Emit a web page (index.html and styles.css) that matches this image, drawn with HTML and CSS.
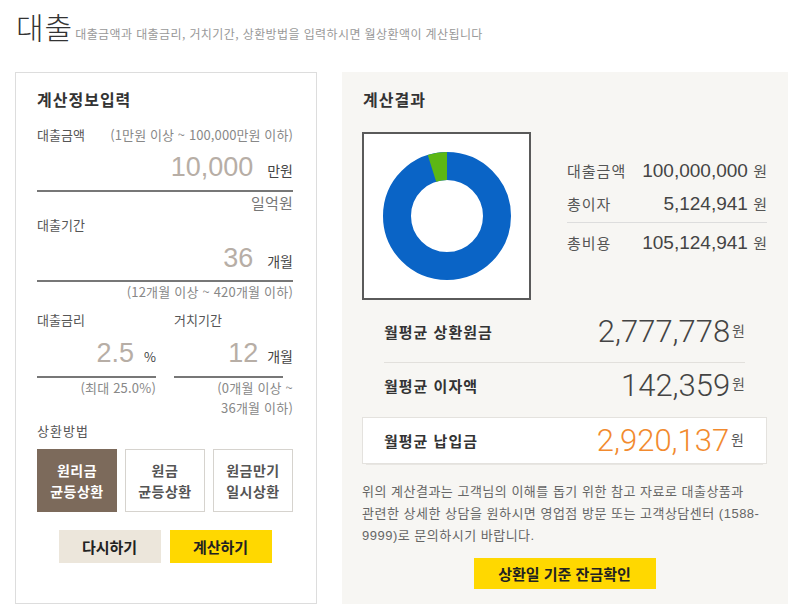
FILE: index.html
```html
<!DOCTYPE html>
<html lang="ko">
<head>
<meta charset="utf-8">
<title>대출</title>
<link rel="stylesheet" href="styles.css">
</head>
<body>
<header class="page-head">
  <h1 class="page-title">대출</h1>
  <p class="page-desc">대출금액과 대출금리, 거치기간, 상환방법을 입력하시면 월상환액이 계산됩니다</p>
</header>
<main class="calc">
  <section class="input-card">
    <h2 class="card-title">계산정보입력</h2>

    <div class="field-label label-split">대출금액 <span class="range">(1만원 이상 ~ 100,000만원 이하)</span></div>
    <div class="value-row"><span class="num">10,000</span><span class="unit">만원</span></div>
    <div class="hint hint-kr">일억원</div>

    <div class="field-label label-gap">대출기간</div>
    <div class="value-row row-b"><span class="num">36</span><span class="unit">개월</span></div>
    <div class="hint">(12개월 이상 ~ 420개월 이하)</div>

    <div class="two-col">
      <div class="col">
        <div class="field-label">대출금리</div>
        <div class="value-row row-c"><span class="num">2.5</span><span class="unit unit-pct">%</span></div>
        <div class="hint">(최대 25.0%)</div>
      </div>
      <div class="col">
        <div class="field-label">거치기간</div>
        <div class="value-row row-c row-short"><span class="num">12</span><span class="unit unit-over">개월</span></div>
        <div class="hint">(0개월 이상 ~<br>36개월 이하)</div>
      </div>
    </div>

    <div class="field-label method-label">상환방법</div>
    <div class="methods">
      <button class="method is-active">원리금<br>균등상환</button>
      <button class="method">원금<br>균등상환</button>
      <button class="method">원금만기<br>일시상환</button>
    </div>

    <div class="actions">
      <button class="btn btn-reset">다시하기</button>
      <button class="btn btn-calc">계산하기</button>
    </div>
  </section>

  <section class="result">
    <h2 class="card-title">계산결과</h2>
    <div class="chart-row">
      <div class="chart">
        <svg width="165" height="164" viewBox="0 0 165 164">
          <circle cx="83" cy="82" r="50" fill="none" stroke="#0a64c6" stroke-width="28"/>
          <circle cx="83" cy="82" r="50" fill="none" stroke="#5cb714" stroke-width="28" stroke-dasharray="15.3 400" transform="rotate(-107.5 83 82)"/>
        </svg>
      </div>
      <div class="summary">
        <div class="sum-row"><span class="sum-label">대출금액</span><span class="sum-val">100,000,000 <span class="sum-unit">원</span></span></div>
        <div class="sum-row"><span class="sum-label">총이자</span><span class="sum-val">5,124,941 <span class="sum-unit">원</span></span></div>
        <div class="sum-row sum-total"><span class="sum-label">총비용</span><span class="sum-val">105,124,941 <span class="sum-unit">원</span></span></div>
      </div>
    </div>

    <div class="monthly">
      <div class="m-row m-first"><span class="m-label">월평균 상환원금</span><span class="m-val">2,777,778<span class="m-unit">원</span></span></div>
      <div class="m-row"><span class="m-label">월평균 이자액</span><span class="m-val">142,359<span class="m-unit">원</span></span></div>
    </div>
    <div class="m-box"><span class="m-label">월평균 납입금</span><span class="m-val m-orange">2,920,137<span class="m-unit">원</span></span></div>

    <p class="note">위의 계산결과는 고객님의 이해를 돕기 위한 참고 자료로 대출상품과<br>관련한 상세한 상담을 원하시면 영업점 방문 또는 고객상담센터 (1588-<br>9999)로 문의하시기 바랍니다.</p>

    <button class="btn btn-balance">상환일 기준 잔금확인</button>
  </section>
</main>
</body>
</html>
```

FILE: styles.css
```css
* { box-sizing: border-box; }
html, body { margin: 0; padding: 0; background: #fff; }
body {
  font-family: "Noto Sans CJK KR", "Noto Sans", sans-serif;
  color: #333;
  width: 800px;
  height: 616px;
  overflow: hidden;
}
h1, h2, p { margin: 0; font-weight: normal; }
button { font-family: inherit; cursor: pointer; }

.page-head {
  display: flex;
  align-items: baseline;
  height: 72px;
  padding: 6px 0 0 16px;
}
.page-title {
  font-size: 30px;
  line-height: 40px;
  font-weight: 300;
  color: #333;
  letter-spacing: 1px;
}
.page-desc {
  margin-left: 2px;
  font-size: 12px;
  color: #999;
  letter-spacing: 0.4px;
}

.calc {
  display: flex;
  gap: 25px;
  padding-left: 15px;
}

/* left card */
.input-card {
  width: 302px;
  height: 532px;
  border: 1px solid #ddd;
  padding: 16px 23px 0 21px;
}
.card-title {
  font-size: 16px;
  line-height: 20px;
  font-weight: bold;
  color: #333;
  letter-spacing: 1px;
}
.field-label {
  font-size: 13px;
  line-height: 20px;
  color: #555;
  margin-top: 16px;
}
.label-split {
  display: flex;
  justify-content: space-between;
}
.range {
  font-size: 13px;
  color: #888;
  letter-spacing: 0.1px;
}
.label-gap { margin-top: 2px; }
.value-row {
  display: flex;
  justify-content: flex-end;
  align-items: baseline;
  height: 47px;
  padding-top: 5px;
  border-bottom: 2px solid #777;
  line-height: 34px;
}
.row-b { padding-top: 6px; }
.row-c { height: 48px; padding-top: 6px; }
.row-short { margin-right: 10px; }
.num {
  font-family: "Liberation Sans", Arial, sans-serif;
  font-size: 27px;
  color: #b7aea6;
}
.unit {
  margin-left: 14px;
  font-size: 14px;
  color: #444;
}
.unit-pct { margin-left: 10px; font-size: 13px; }
.unit-over { margin-left: 9px; margin-right: -10px; }
.hint {
  text-align: right;
  font-size: 13px;
  line-height: 20px;
  color: #888;
  letter-spacing: 0.2px;
}
.hint-kr {
  margin-top: 1px;
  font-size: 15px;
  color: #777;
}

.two-col {
  display: grid;
  grid-template-columns: 119px 119px;
  column-gap: 18px;
  margin-top: -8px;
}
.method-label { margin-top: 3px; letter-spacing: 1px; }

.methods {
  display: grid;
  grid-template-columns: repeat(3, 1fr);
  gap: 8px;
  margin-top: 8px;
}
.method {
  height: 63px;
  border: 1px solid #d6d3ce;
  background: #fff;
  color: #555;
  font-size: 14px;
  line-height: 21px;
  font-weight: bold;
  letter-spacing: 0.5px;
  padding: 0;
}
.method.is-active {
  background: #7c6a5b;
  border-color: #7c6a5b;
  color: #fff;
}

.actions {
  display: flex;
  justify-content: center;
  gap: 9px;
  margin-top: 18px;
}
.btn {
  border: 0;
  padding: 0;
  font-size: 15px;
  font-weight: bold;
  color: #222;
}
.btn-reset {
  width: 102px;
  height: 33px;
  background: #ece6db;
}
.btn-calc {
  width: 102px;
  height: 33px;
  background: #ffd800;
}

/* right panel */
.result {
  width: 446px;
  height: 532px;
  background: #f7f6f3;
  padding: 17px 21px 0 20px;
}
.result .card-title { margin-left: 1px; }
.chart-row {
  display: flex;
  margin-top: 23px;
}
.chart {
  width: 169px;
  height: 168px;
  border: 2px solid #5a5a5a;
  background: #fff;
}
.chart svg { display: block; }
.summary {
  width: 200px;
  margin-left: 36px;
  padding-top: 22px;
}
.sum-row {
  display: flex;
  justify-content: space-between;
  align-items: center;
  height: 33px;
}
.sum-total {
  margin-top: 2px;
  border-top: 1px solid #ddd;
  padding-top: 3px;
  height: 37px;
}
.sum-label {
  font-size: 15px;
  color: #555;
  letter-spacing: 1px;
}
.sum-val {
  font-family: "Liberation Sans", Arial, sans-serif;
  font-size: 19px;
  color: #444;
}
.sum-unit {
  font-family: "Noto Sans CJK KR", sans-serif;
  font-size: 15px;
  color: #555;
}

.monthly {
  padding: 0 22px;
  margin-top: 1px;
}
.m-row {
  display: flex;
  justify-content: space-between;
  align-items: center;
  height: 44px;
}
.m-first {
  height: 62px;
  border-bottom: 1px solid #e2e0dc;
}
.m-label {
  font-size: 15px;
  font-weight: bold;
  color: #333;
  letter-spacing: 1px;
}
.m-val {
  display: flex;
  align-items: center;
  font-family: Roboto, "Noto Sans", sans-serif;
  font-weight: 300;
  font-size: 31px;
  color: #444;
}
.m-unit {
  margin-left: 2px;
  font-family: "Noto Sans CJK KR", sans-serif;
  font-size: 14px;
  font-weight: normal;
  color: #555;
  margin-top: -4px;
}
.m-box {
  display: flex;
  justify-content: space-between;
  align-items: center;
  height: 47px;
  margin-top: 10px;
  padding: 0 22px 0 21px;
  background: #fff;
  border: 1px solid #e4e2de;
  box-shadow: 0 5px 0 -4px #e8e6e2;
}
.m-orange { color: #f28a2e; }

.note {
  margin-top: 17px;
  font-family: "Liberation Sans", "Noto Sans CJK KR", sans-serif;
  font-size: 13px;
  line-height: 22px;
  color: #666;
  letter-spacing: 0.5px;
  white-space: nowrap;
}
.btn-balance {
  display: block;
  width: 182px;
  height: 31px;
  margin: 11px auto 0;
  background: #ffd800;
}
```
